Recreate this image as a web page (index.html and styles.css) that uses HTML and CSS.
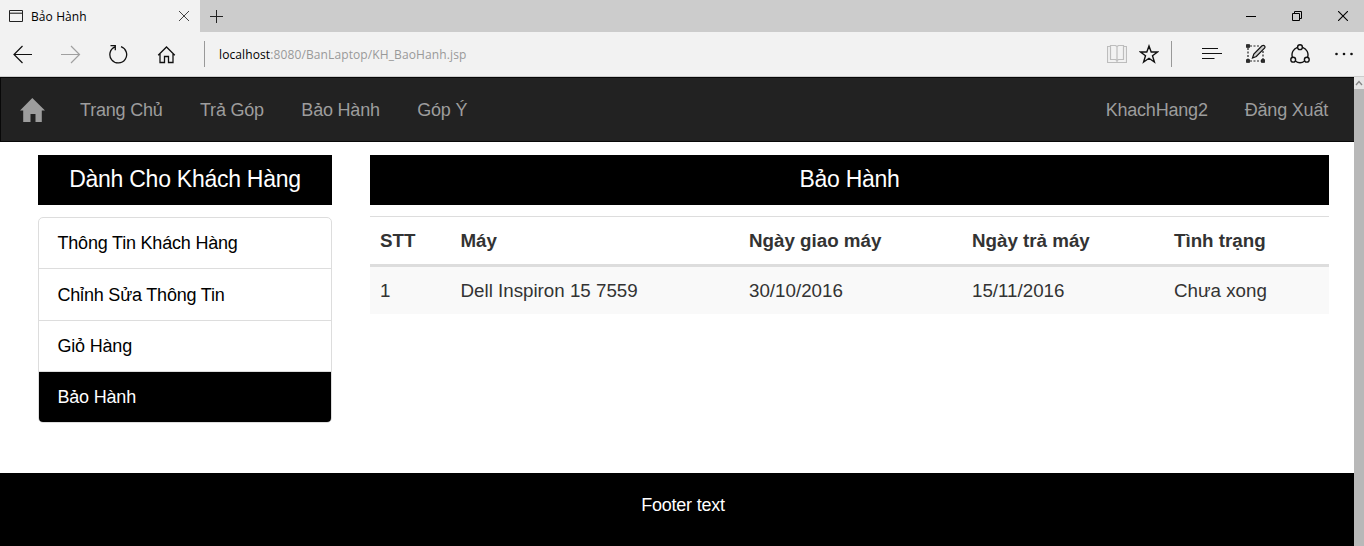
FILE: index.html
```
<!DOCTYPE html>
<html lang="vi">
<head>
<meta charset="utf-8">
<title>Bảo Hành</title>
<link rel="stylesheet" href="styles.css">
</head>
<body>
<div class="window">
  <div class="tabstrip">
    <div class="tab">
      <svg class="page-icon" width="14" height="12" viewBox="0 0 14 12"><path d="M.5.5h13v11H.5z" fill="none" stroke="#222"/><path d="M1 2.5h12" stroke="#aaa"/><path d="M1 3.5h12" stroke="#555"/></svg>
      <span class="tab-title">Bảo Hành</span>
      <svg width="12" height="12" viewBox="0 0 12 12"><path d="M1 1l10 10M11 1L1 11" stroke="#444" stroke-width="1"/></svg>
    </div>
    <svg class="new-tab" width="14" height="14" viewBox="0 0 14 14"><path d="M0 7.500h13M6.500 1v13" stroke="#222"/></svg>
    <div class="win-controls">
      <svg width="10" height="10" viewBox="0 0 10 10"><path d="M0 5.500h10" stroke="#000"/></svg>
      <svg width="10" height="10" viewBox="0 0 10 10"><path d="M.5 2.500h7v7h-7zM2.500 2.500v-2h7v7h-2" fill="none" stroke="#000"/></svg>
      <svg width="10" height="10" viewBox="0 0 10 10"><path d="M0 0l10 10M10 0L0 10" stroke="#000" stroke-width="1.1"/></svg>
    </div>
  </div>
  <div class="toolbar">
    <div class="nav-buttons">
      <svg width="20" height="20" viewBox="0 0 20 20"><path d="M19 10.500H1M9.500 2L1 10.500 9.500 19" fill="none" stroke="#111" stroke-width="1.200"/></svg>
      <svg width="20" height="20" viewBox="0 0 20 20"><path d="M0 10.500H18.500M10 2L18.500 10.500 10 19" fill="none" stroke="#a0a0a0" stroke-width="1.200"/></svg>
      <svg width="20" height="20" viewBox="0 0 20 20"><path d="M12 2.600A8.400 8.400 0 1 1 6 2.800M1.500 1.600H6.300V6.200" fill="none" stroke="#111" stroke-width="1.300"/></svg>
      <svg width="20" height="20" viewBox="0 0 20 20"><path d="M1.200 11.200L9.500 3l8.300 8.200M3 9.700v8.800h4.500v-6h4v6H16V9.700" fill="none" stroke="#111" stroke-width="1.300"/></svg>
    </div>
    <div class="address"><span class="host">localhost</span>:8080/BanLaptop/KH_BaoHanh.jsp</div>
    <div class="page-tools">
      <svg width="20" height="20" viewBox="0 0 20 20"><path d="M3.500 2.500H.5v16h19v-16h-3M3.500 1.500h5l1.500 1 1.500-1h5v14h-5l-1.500 1-1.500-1h-5zM10 2.500V18" fill="none" stroke="#bdbdbd" stroke-width="1.200"/></svg>
      <svg width="20" height="20" viewBox="0 0 20 20"><path d="M10 2l2.200 6h6.300l-5 3.800 1.900 6.300L10 14.300l-5.400 3.800 1.900-6.300-5-3.800h6.300z" fill="none" stroke="#111" stroke-width="1.400"/></svg>
    </div>
    <div class="hub-tools">
      <svg width="20" height="20" viewBox="0 0 20 20"><path d="M0 4.500h16M0 9.500h20M0 14.500h12.500" stroke="#111" stroke-width="1.200"/></svg>
      <svg width="20" height="20" viewBox="0 0 20 20"><path d="M2 4v12M4 17h12M4 2h9M17 7v9" fill="none" stroke="#222" stroke-width="1.200" stroke-dasharray="2 1.500"/><path d="M.8.800h2.400v2.400H.8zM.8 15.800h2.400v2.400H.8zM15.800 15.800h2.400v2.400h-2.400z" fill="#777" stroke="#111" stroke-width="1.300"/><path d="M6.500 14l1.300-4L16 1.800q1.500-1 2.500 0t0 2.400L10.300 12.500z" fill="#ccc" stroke="#111" stroke-width="1.200"/></svg>
      <svg width="20" height="20" viewBox="0 0 20 20"><g fill="none" stroke="#111" stroke-width="1.400"><path d="M12.600 3.300A8 8 0 0 1 17.600 13.300M14.700 17A8 8 0 0 1 5.300 17M2.400 13.300A8 8 0 0 1 7.400 3.300"/><circle cx="10" cy="3.200" r="2.400"/><circle cx="3.200" cy="15.700" r="2.400"/><circle cx="16.800" cy="15.700" r="2.400"/></g></svg>
      <svg width="20" height="20" viewBox="0 0 20 20"><g fill="#111"><circle cx="2.500" cy="10" r="1.300"/><circle cx="10" cy="10" r="1.300"/><circle cx="17.500" cy="10" r="1.300"/></g></svg>
    </div>
  </div>
  <div class="viewport">
    <div class="page">
      <nav class="navbar">
        <svg class="home" width="25" height="24" viewBox="0 0 25 24"><path d="M12.300 0L25 12.500h-3.200V24h-6.300v-8h-5v8H3.200V12.500H0z" fill="#9d9d9d"/></svg>
        <a class="n1">Trang Chủ</a><a class="n2">Trả Góp</a><a class="n3">Bảo Hành</a><a class="n4">Góp Ý</a>
        <a class="user">KhachHang2</a><a class="logout">Đăng Xuất</a>
      </nav>
      <div class="content">
        <aside class="sidebar">
          <h4 class="heading">Dành Cho Khách Hàng</h4>
          <div class="list">
            <a class="item">Thông Tin Khách Hàng</a>
            <a class="item second">Chỉnh Sửa Thông Tin</a>
            <a class="item">Giỏ Hàng</a>
            <a class="item active">Bảo Hành</a>
          </div>
        </aside>
        <main class="main">
          <h4 class="heading">Bảo Hành</h4>
          <table class="table">
            <colgroup><col class="c1"><col class="c2"><col class="c3"><col class="c4"><col></colgroup>
            <thead><tr><th>STT</th><th>Máy</th><th>Ngày giao máy</th><th>Ngày trả máy</th><th>Tình trạng</th></tr></thead>
            <tbody><tr><td>1</td><td>Dell Inspiron 15 7559</td><td>30/10/2016</td><td>15/11/2016</td><td>Chưa xong</td></tr></tbody>
          </table>
        </main>
      </div>
      <footer class="footer">Footer text</footer>
    </div>
    <div class="scrollbar"><div class="scroll-up"><svg width="8" height="6" viewBox="0 0 8 6"><path d="M1 5l3-3.500L7 5" fill="none" stroke="#858585" stroke-width="1.300"/></svg></div></div>
  </div>
</div>
</body>
</html>
```
FILE: styles.css
```
* { box-sizing: border-box; }
body { margin: 0; background: #fff; overflow: hidden; font-family: "Liberation Sans", Arial, sans-serif; }
svg { display: block; flex: none; }
.window { width: 1364px; height: 546px; display: flex; flex-direction: column; }

.tabstrip { height: 32px; flex: none; display: flex; align-items: center; background: #ccc; }
.tab { width: 200px; height: 32px; display: flex; align-items: center; padding: 0 10px 0 9px; background: #f2f2f2; font: 12px "Open Sans", "Noto Sans", sans-serif; color: #000; }
.page-icon { margin-right: 8px; }
.tab-title { flex: 1; letter-spacing: 0.1px; }
.new-tab { margin-left: 10px; }
.win-controls { margin-left: auto; padding-right: 16px; display: flex; gap: 36px; }

.toolbar { height: 45px; flex: none; display: flex; align-items: center; background: #f2f2f2; border-bottom: 1px solid #ccc; }
.nav-buttons { display: flex; gap: 28px; padding-left: 13px; width: 204px; }
.address { flex: 1; height: 26px; line-height: 27px; padding-left: 14px; border-left: 1px solid #999; font-family: "Open Sans", "Noto Sans", sans-serif; font-size: 12px; letter-spacing: 0.11px; color: #999; }
.host { color: #000; }
.page-tools { display: flex; align-items: center; gap: 12px; height: 26px; padding-right: 12px; border-right: 1px solid #999; }
.hub-tools { display: flex; gap: 24px; padding: 0 10px 0 30px; }

.viewport { flex: 1; display: flex; min-height: 0; }
.page { width: 1354px; display: flex; flex-direction: column; }
.scrollbar { width: 10px; background: #b8b8b8; }
.scroll-up { height: 12px; display: flex; align-items: center; justify-content: center; background: #e6e6e6; }

.navbar { height: 65px; flex: none; display: flex; align-items: center; padding: 0 26px 0 19px; background: #222; border: 1px solid #080808; border-right: 0; color: #9d9d9d; font-size: 18px; letter-spacing: -0.2px; }
.navbar a { white-space: nowrap; padding-top: 1px; }
.home { margin-right: 35px; }
.n1, .n2, .n3 { margin-right: 37.4px; }
.user { margin-left: auto; margin-right: 37px; }

.content { flex: 1; display: flex; padding: 13px 25px 0 38px; gap: 38px; align-items: flex-start; }
.sidebar { width: 294px; }
.main { width: 959px; }
.heading { height: 50px; line-height: 48px; margin: 0; background: #000; color: #fff; font-size: 23px; letter-spacing: -0.26px; font-weight: 400; text-align: center; }
.list { margin-top: 12px; border: 1px solid #ddd; border-radius: 5px; overflow: hidden; height: 206px; display: grid; grid-template-rows: 51px 52px 51px 50px; }
.item { padding-left: 18.5px; line-height: 51px; border-bottom: 1px solid #ddd; font-size: 18px; letter-spacing: -0.2px; color: #000; }
.item.second { line-height: 53px; }
.item.active { background: #000; color: #fff; border-bottom: 0; }

.table { width: 959px; margin-top: 11px; border-collapse: separate; border-spacing: 0; table-layout: fixed; font-size: 18.75px; color: #333; }
.c1 { width: 80.5px; }
.c2 { width: 288.5px; }
.c3 { width: 223px; }
.c4 { width: 202px; }
.table th, .table td { padding: 0 0 0 10px; text-align: left; white-space: nowrap; }
.table th { height: 51px; padding-top: 1px; border-top: 1px solid #ddd; border-bottom: 3px solid #ddd; }
.table td { height: 47px; background: #f9f9f9; }

.footer { height: 73px; flex: none; padding: 22px 0 0 12px; background: #000; color: #fff; font-size: 18px; letter-spacing: -0.22px; text-align: center; }
```
